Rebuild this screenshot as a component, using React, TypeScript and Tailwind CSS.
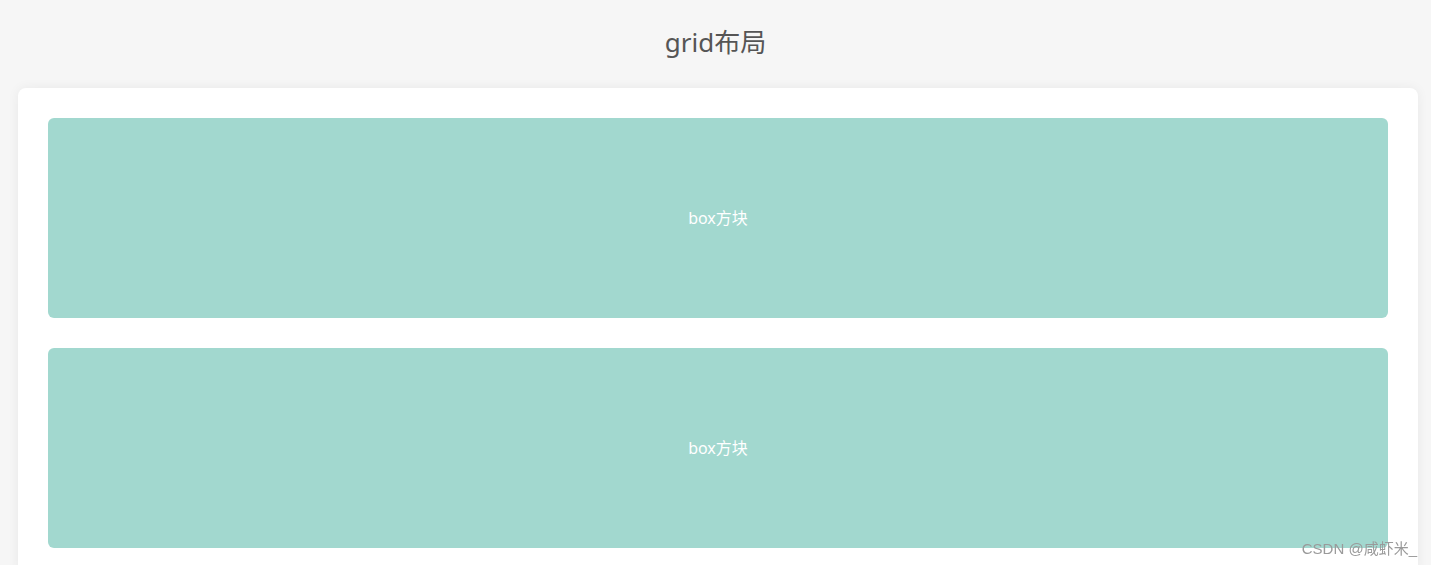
export default function App() {
  const boxes = ["box方块", "box方块"];
  return (
    <div className="min-h-[565px] bg-[#f6f6f6] font-['Noto_Sans','Noto_Sans_CJK_SC',sans-serif]">
      <h1 className="flex h-[88px] items-center justify-center pb-[4px] text-[26px] text-[#555555]">grid布局</h1>
      <div className="ml-[18px] w-[1400px] rounded-lg bg-white p-[30px] shadow-[0_0_12px_rgba(0,0,0,0.06)]">
        <div className="grid gap-[30px]">
          {boxes.map((b, i) => (
            <div key={i} className="flex h-[200px] items-center justify-center rounded-md bg-[#a2d8cf] text-[16px] text-white">
              {b}
            </div>
          ))}
        </div>
      </div>
      <span className="fixed bottom-[9px] right-[14px] font-['Liberation_Sans','Noto_Sans_CJK_SC',sans-serif] text-[15px] leading-none text-[#9a9a9a]">CSDN @咸虾米_</span>
    </div>
  );
}
